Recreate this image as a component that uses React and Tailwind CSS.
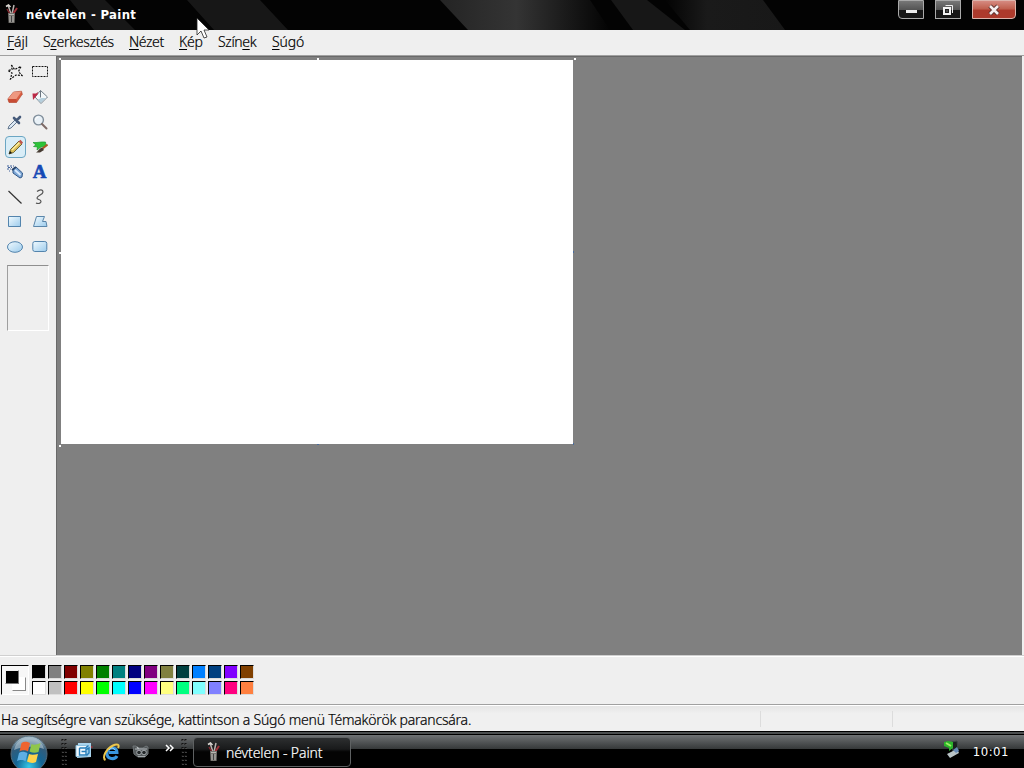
import React from 'react';

const MENUS = [
  { parts: ['', 'F', 'ájl'], cls: 'w-9' },
  { parts: ['S', 'z', 'erkesztés'], cls: 'w-[86px] tracking-[-0.3px]' },
  { parts: ['', 'N', 'ézet'], cls: 'w-[50px] tracking-[-0.4px]' },
  { parts: ['', 'K', 'ép'], cls: 'w-[39px] tracking-[-0.2px]' },
  { parts: ['Szín', 'e', 'k'], cls: 'w-[54px] tracking-[-0.35px]' },
  { parts: ['', 'S', 'úgó'], cls: 'w-10 tracking-[-0.1px]' },
];

const COLOURS = [
  ['bg-black', 'bg-white'],
  ['bg-[#808080]', 'bg-[#c0c0c0]'],
  ['bg-[#800000]', 'bg-[#ff0000]'],
  ['bg-[#808000]', 'bg-[#ffff00]'],
  ['bg-[#008000]', 'bg-[#00ff00]'],
  ['bg-[#008080]', 'bg-[#00ffff]'],
  ['bg-[#000080]', 'bg-[#0000ff]'],
  ['bg-[#800080]', 'bg-[#ff00ff]'],
  ['bg-[#808040]', 'bg-[#ffff80]'],
  ['bg-[#004040]', 'bg-[#00ff80]'],
  ['bg-[#0080ff]', 'bg-[#80ffff]'],
  ['bg-[#004080]', 'bg-[#8080ff]'],
  ['bg-[#8000ff]', 'bg-[#ff0080]'],
  ['bg-[#804000]', 'bg-[#ff8040]'],
];

function Svg({ children, className = 'h-4 w-4' }) {
  return (
    <svg viewBox="0 0 16 16" fill="none" className={className}>
      {children}
    </svg>
  );
}

function BrushPot({ className }) {
  return (
    <svg viewBox="0 0 14 20" fill="none" className={className}>
      <path d="M3 1l3 9M9 1L7 10" stroke="#b9b2ae" strokeWidth="1.5" />
      <path d="M1 2.5l2.5-1.5 2 2" stroke="#d8d5d0" strokeWidth="1.6" />
      <path d="M12 4L8 10" stroke="#a03038" strokeWidth="2" />
      <path d="M2 5l3 5" stroke="#8b2a30" strokeWidth="1.4" />
      <path d="M3 9h7l-.4 10H3.6z" fill="#777571" />
      <path d="M4 10.5h5M5 12v6M8 12v6" stroke="#b9b7b2" />
      <path d="M6.5 12v6" stroke="#444" />
    </svg>
  );
}

function TextA() {
  return (
    <span className="font-['Liberation_Serif',serif] text-[19px] leading-4 font-bold text-[#1649b5] [-webkit-text-stroke:0.6px_#1649b5]">
      A
    </span>
  );
}

const TOOLS = [
  <Svg key="free">
    <path d="M4.500 1l3 4.500L14 2.500l-2.500 5 3.500 4-6-.5L3.500 15l1.500-6L1 6.500l4-1z" stroke="#111" strokeWidth="1.200" strokeDasharray="2 1.200" />
  </Svg>,
  <Svg key="select">
    <path d="M.5 2.500h15v10H.5z" stroke="#111" strokeDasharray="2 1" />
  </Svg>,
  <Svg key="eraser">
    <path d="M.8 10L6.500 3l8-.8.8 3-5.800 8.300H2z" fill="#d95f43" stroke="#a9432d" strokeWidth=".6" />
    <path d="M1 10L6.500 3l8-.5-5.200 7.500z" fill="#ee9880" />
    <path d="M1 10h8.300l.5 3.300H2z" fill="#c74c34" />
  </Svg>,
  <Svg key="fill">
    <path d="M8.500 1.500l7 6.500-6.500 6.500-6-6.500z" fill="#f4f8fa" stroke="#74808a" />
    <path d="M8.500 1.500v7" stroke="#6b7680" />
    <path d="M.5 4.500h3.500l2-1.500-.5 2.500-2.500 3-2 2.500z" fill="#bd2946" />
    <path d="M9.500 9h4.500l-5 4.800-3.500-3z" fill="#b5cfdd" />
  </Svg>,
  <Svg key="pick">
    <path d="M1 15l1-3 6-6 2 2-6 6z" fill="#dce8f4" stroke="#64788f" />
    <path d="M7 4l5 5M10 6l3-3" stroke="#465b7b" strokeWidth="2.600" strokeLinecap="round" />
  </Svg>,
  <Svg key="zoom">
    <circle cx="6.500" cy="6" r="4.900" fill="#e9f1f7" stroke="#7f8d9a" strokeWidth="1.400" />
    <path d="M3.500 6a3 3 0 013-3" stroke="#fff" />
    <path d="M10 10l4.500 4.500" stroke="#7d6966" strokeWidth="2" strokeLinecap="round" />
  </Svg>,
  <Svg key="pencil">
    <path d="M1 15l1.500-4.500L11 2l3 3-8.500 8.500z" fill="#d9bd58" stroke="#5f582c" strokeWidth=".9" />
    <path d="M4 11l8-8" stroke="#fff0a3" strokeWidth="1.300" />
    <path d="M10.500 2.500L12.500.8 15 3.500l-1.500 2z" fill="#bf554d" />
    <path d="M1 15l1-3 2 2z" fill="#111" />
  </Svg>,
  <Svg key="brush">
    <path d="M1 3.500c4 .5 8-1 12.500-.5L14 7 9 8l-4 3 .5-3-4-.5L4 6z" fill="#2cc437" stroke="#1a9a2b" strokeWidth=".7" />
    <path d="M15.500 5.500L10 10" stroke="#a65a25" strokeWidth="2" />
    <path d="M10 8.500l2 2.500L8 13.500H4c2-1 3-4 6-5z" fill="#463b32" />
  </Svg>,
  <Svg key="spray">
    <path d="M6 5l3-2 6.500 6-.5 4-2 1-7-5z" fill="#7fa9d7" stroke="#315787" />
    <path d="M8 6l5.500 5" stroke="#dcecff" strokeWidth="1.700" />
    <path d="M5 6l4-3" stroke="#28446c" strokeWidth="2" />
    <path d="M0 2h2m1 0h2m1 0h1M1 3.500h2m1 0h1M0 5h2m1 0h1M2 7h1" stroke="#3f619a" />
  </Svg>,
  <TextA key="text" />,
  <Svg key="line">
    <path d="M1.500 2l13 12.500" stroke="#333" strokeWidth="1.200" />
  </Svg>,
  <Svg key="curve">
    <path d="M5 2.500c3-2.500 6-2 6 .5 0 3-6 3.500-6 6 0 2 4 1 4 3.500 0 2-3 2.500-5 1.500" stroke="#555" strokeWidth="1.200" />
  </Svg>,
  <Svg key="rect">
    <path d="M1.500 2.500h12v10h-12z" fill="url(#glass)" stroke="#5384ad" />
  </Svg>,
  <Svg key="poly">
    <path d="M4.500 2.500h8L10.500 7.500h3.500l1 5H1.500z" fill="url(#glass)" stroke="#5b86aa" />
  </Svg>,
  <Svg key="ellipse">
    <ellipse cx="8" cy="8" rx="7.500" ry="5.300" fill="url(#glass)" stroke="#5384ad" />
  </Svg>,
  <Svg key="round">
    <rect x=".8" y="2.500" width="14" height="10" rx="2" fill="url(#glass)" stroke="#5384ad" />
  </Svg>,
];

function TitleBar() {
  return (
    <header className="relative flex h-[30px] shrink-0 overflow-hidden bg-[#030303]">
      <svg className="absolute inset-0 h-[30px] w-[1024px]" viewBox="0 0 1024 30">
        <defs>
          <linearGradient id="streak">
            <stop offset="0" stopColor="#242424" />
            <stop offset=".45" stopColor="#343434" />
            <stop offset="1" stopColor="#030303" />
          </linearGradient>
          <linearGradient id="band">
            <stop offset="0" stopColor="#030303" />
            <stop offset=".35" stopColor="#1a1a1a" />
            <stop offset="1" stopColor="#181818" />
          </linearGradient>
        </defs>
        <path d="M70 0h35l30 30H94zM187 0h73l28 30h-74z" fill="#171717" />
        <path d="M440 0h150l20 30H468z" fill="url(#streak)" />
        <path d="M611 0h36l38 30h-52z" fill="#171717" />
        <path d="M665 0h98l22 30H690z" fill="url(#band)" />
      </svg>
      <div className="relative flex w-full items-start">
        <BrushPot className="mt-1 ml-[5px] h-5 w-[14px]" />
        <h1 className="mt-[5px] ml-[7px] font-['DejaVu_Sans_Condensed','DejaVu_Sans',sans-serif] text-[13px] leading-5 font-bold tracking-[0.35px] text-white">
          névtelen - Paint
        </h1>
        <div className="ml-auto flex pr-2">
          <button className="mr-[11px] flex h-[19px] w-[26px] items-end justify-center rounded-bl border border-[#aaa] bg-linear-to-b from-[#777] from-0% via-[#555] via-50% to-[#171717] to-55% pb-[5px]">
            <span className="h-[3px] w-[11px] bg-[#eee]" />
          </button>
          <button className="mr-[11px] flex h-[19px] w-[26px] items-center justify-center border border-[#aaa] bg-linear-to-b from-[#777] from-0% via-[#555] via-50% to-[#171717] to-55%">
            <svg viewBox="0 0 12 12" className="h-3 w-3" fill="none">
              <path d="M3.500 1.500h7V9" stroke="#eee" />
              <path d="M2 4h6v6H2z" fill="#222" stroke="#f4f4f4" strokeWidth="2" />
              <path d="M4.500 6.500h1v1h-1z" fill="#ccc" />
            </svg>
          </button>
          <button className="flex h-[19px] w-11 items-center justify-center rounded-br border border-[#ddb4ac] bg-linear-to-b from-[#d58a80] from-0% via-[#c0604f] via-45% to-[#ad3a2c] to-55%">
            <svg viewBox="0 0 14 12" className="h-3 w-[14px]" fill="none">
              <path d="M3 2l8 8M11 2L3 10" stroke="#542c29" strokeWidth="4.500" />
              <path d="M3 2l8 8M11 2L3 10" stroke="#f5eeee" strokeWidth="2.600" />
            </svg>
          </button>
        </div>
      </div>
    </header>
  );
}

function ToolBox() {
  return (
    <aside className="w-14 shrink-0 bg-[#efefef] pt-[3px]">
      <div className="grid grid-cols-[25px_25px] auto-rows-[25px] pl-[2px]">
        {TOOLS.map((tool, i) => (
          <button
            key={i}
            className={
              i === 6
                ? 'ml-[3px] flex h-[22px] w-[21px] items-center justify-center self-center rounded-sm border border-[#6ba6c3] bg-[#d9edf7]'
                : 'flex items-center justify-center'
            }
          >
            {tool}
          </button>
        ))}
      </div>
      <div className="mt-[6px] ml-[7px] h-[66px] w-[42px] border border-t-[#8f8f8f] border-r-white border-b-white border-l-[#9f9f9f]" />
    </aside>
  );
}

function Handle({ className }) {
  return <span className={`absolute size-0.5 ${className}`} />;
}

function Canvas() {
  return (
    <main className="min-w-0 flex-1 border-t border-l border-[#696969] bg-[#808080] pt-[3px] pl-1">
      <div className="relative h-[384px] w-[512px] bg-white">
        <Handle className="-top-0.5 -left-0.5 bg-white" />
        <Handle className="-top-0.5 left-[256px] bg-white" />
        <Handle className="-top-0.5 left-[513px] bg-white" />
        <Handle className="top-[192px] -left-0.5 bg-white" />
        <Handle className="top-[191px] left-[512px] w-px! bg-[#4a6c9c]" />
        <Handle className="top-[385px] -left-0.5 bg-white" />
        <Handle className="top-[384px] left-[256px] h-px! bg-[#4a6c9c]" />
        <Handle className="top-[383px] left-[512px] w-px! bg-[#4a6c9c]" />
      </div>
    </main>
  );
}

function Palette() {
  return (
    <section className="flex h-12 shrink-0 border-t border-white bg-[#efefef] pt-2 pl-px">
      <div className="relative mr-[3px] h-[30px] w-7 border border-t-black border-r-white border-b-white border-l-black bg-[#f7f7f7]">
        <div className="absolute top-[11px] left-[10px] h-[14px] w-[14px] border border-t-white border-r-[#888] border-b-[#888] border-l-white bg-white" />
        <div className="absolute top-1 left-[3px] h-[14px] w-[14px] border border-t-[#eee] border-r-[#777] border-b-[#777] border-l-[#eee] bg-black" />
      </div>
      <div className="flex">
        {COLOURS.map((pair, i) => (
          <div key={i} className="flex w-4 flex-col gap-0.5">
            {pair.map((c) => (
              <button
                key={c}
                className={`h-[14px] w-[14px] border border-t-black border-r-[#ddd] border-b-[#ddd] border-l-black ${c}`}
              />
            ))}
          </div>
        ))}
      </div>
    </section>
  );
}

function DotGrip({ className }) {
  return (
    <svg viewBox="0 0 6 28" className={className} fill="none">
      <path d="M1.500 0v28M4.500 0v28" stroke="#111" strokeWidth="2" strokeDasharray="2 2" />
      <path d="M2 1v27M5 1v27" stroke="#777" strokeDasharray="1 3" />
    </svg>
  );
}

function StartOrb() {
  return (
    <svg viewBox="0 0 38 32" className="h-8 w-[38px]">
      <defs>
        <radialGradient id="orb" cx=".5" cy=".85" r=".8">
          <stop offset="0" stopColor="#35c9e8" />
          <stop offset=".45" stopColor="#146594" />
          <stop offset=".8" stopColor="#335b79" />
          <stop offset="1" stopColor="#a1b8c5" />
        </radialGradient>
      </defs>
      <circle cx="19" cy="18" r="18" fill="url(#orb)" stroke="#546c7c" />
      <path d="M4 14C6 5 12 2 19 2s13 3 15 11c-9-3-20-3-30 1z" fill="#b7cad5" opacity=".6" />
      <path d="M11.500 7c3-2 6-1 8.500 0l-2 8.500c-2-1-5-2-8.500 0z" fill="#ef6430" />
      <path d="M21.500 8c2 1 5 1 9-1l-2 9c-3 1-6 1-9-.5z" fill="#8fc64b" />
      <path d="M9 17c3-2 6-1 8.500.2l-2 8c-2-1-5-2-8.500 0z" fill="#5eaee4" />
      <path d="M19 18c2 1 5 1 9 0l-2 8c-3 1.500-6 1-9-.5z" fill="#ffd24b" />
    </svg>
  );
}

function TaskBar() {
  return (
    <footer className="flex h-[37px] shrink-0 flex-col bg-black text-white">
      <div className="mt-px h-[2px] shrink-0 bg-[#4c4f50]" />
      <div className="h-px shrink-0 bg-black" />
      <div className="flex min-h-0 flex-1 items-start bg-linear-to-b from-[#707375] from-0% via-[#36393a] via-[42%] to-black to-[44%]">
        <button className="ml-[10px] h-8 w-[38px] pt-px"><StartOrb /></button>
        <DotGrip className="mt-1 ml-[13px] h-7 w-[6px]" />
        <svg viewBox="0 0 18 18" className="mt-[7px] ml-2 h-[18px] w-[18px]" fill="none">
          <path d="M3 1h13v14l-14 1z" fill="#a9d3ec" />
          <path d="M1 3.500h11v11H1z" fill="#f2f9fd" stroke="#8fc3e0" />
          <path d="M4.500 6h6l3-2.500M4.500 6v7H12l2-2V6l-3 1.500V13M6.500 9.500h5" stroke="#267db9" strokeWidth="1.400" />
          <path d="M16 5h1.500" stroke="#b4303c" strokeWidth="1.500" />
        </svg>
        <svg viewBox="0 0 20 20" className="mt-[7px] ml-[9px] h-5 w-5" fill="none">
          <path d="M15 14c-2 4-10 3.500-10-2.500C5 4.500 15 4 15 10.500H7" stroke="#3997df" strokeWidth="3" />
          <path d="M3.500 18C-.5 16 4 7 11 3.500c4-2 7-1 5 2.500" stroke="#edc64a" strokeWidth="2" />
          <path d="M7 8c2-3 5-2 6 0" stroke="#a6dcff" />
        </svg>
        <svg viewBox="0 0 18 18" className="mt-[7px] ml-[10px] h-[18px] w-[18px]" fill="none">
          <path d="M1 4h3l2 2h5l3-2 2 1v7l-3 3H6l-4-3z" fill="#54595b" stroke="#6e7477" />
          <path d="M3 7h12M5 5l2 2" stroke="#b4babd" strokeWidth="1.200" />
          <circle cx="7" cy="10.500" r="2.300" fill="#25292b" stroke="#a5abae" />
          <circle cx="12" cy="10.500" r="2.300" fill="#25292b" stroke="#a5abae" />
          <path d="M6 14.500h7" stroke="#a4aaad" />
        </svg>
        <svg viewBox="0 0 9 8" className="mt-[9px] ml-[15px] h-2 w-[9px]" fill="none">
          <path d="M1 1l3 3-3 3M5 1l3 3-3 3" stroke="#fff" strokeWidth="1.500" />
        </svg>
        <DotGrip className="mt-1 ml-[7px] h-7 w-[6px]" />
        <button className="mt-0.5 ml-[6px] flex h-[30px] w-[158px] items-center rounded border border-[#5e6162] bg-linear-to-b from-[#2d2f30] from-0% via-[#191a1b] via-40% to-[#040404] to-50%">
          <BrushPot className="ml-[13px] h-5 w-[14px]" />
          <span className="mt-px ml-[5px] text-[14px] leading-5 font-light tracking-[-0.1px] whitespace-nowrap [-webkit-text-stroke:0.2px]">névtelen - Paint</span>
        </button>
        <svg viewBox="0 0 18 20" className="mt-1 ml-auto h-5 w-[18px]" fill="none">
          <path d="M9 3l5-1 1 9-5 2z" fill="#1b211f" stroke="#3b4845" />
          <path d="M1 3l4-1 5 1v6l-4 3V9L1 7z" fill="#2bb52b" />
          <path d="M3 4l5 3" stroke="#a0ed66" strokeWidth="2" />
          <path d="M4 15l10-5 2 4-9 5z" fill="#b9c3c6" />
          <path d="M10 11l4-3 2 4-3 2z" fill="#6689b5" />
        </svg>
        <time className="mt-[7px] mr-[15px] ml-3 font-['DejaVu_Sans_Condensed','DejaVu_Sans',sans-serif] text-[13px] leading-5 tracking-[0.5px]">10:01</time>
      </div>
    </footer>
  );
}

export default function App() {
  return (
    <div className="relative flex h-[768px] w-[1024px] cursor-default flex-col overflow-hidden bg-[#efefef] font-['Noto_Sans',sans-serif] text-black">
      <svg className="absolute h-0 w-0">
        <linearGradient id="glass" x2="1" y2="1">
          <stop stopColor="#f2fbff" />
          <stop offset="1" stopColor="#9ccbec" />
        </linearGradient>
      </svg>
      <TitleBar />
      <nav className="flex h-[25px] shrink-0 items-center bg-[#efefef] pb-px pl-[7px] text-[14px] leading-5 font-light [-webkit-text-stroke:0.2px]">
        {MENUS.map(({ parts, cls }) => (
          <span key={parts.join('')} className={`whitespace-nowrap ${cls}`}>
            {parts[0]}
            <span className="underline underline-offset-2">{parts[1]}</span>
            {parts[2]}
          </span>
        ))}
      </nav>
      <div className="flex h-[601px] shrink-0 border-t border-b border-t-[#a0a0a0] border-b-[#d0d0d0] pr-0.5">
        <ToolBox />
        <Canvas />
      </div>
      <Palette />
      <div className="h-px shrink-0 bg-[#a0a0a0]" />
      <div className="flex h-[26px] shrink-0 items-center border-t border-white bg-linear-to-b from-[#e5e5e5] to-[#f0f0f0] to-30% pl-px text-[14px] leading-5 font-light">
        <p className="w-[759px] pt-0.5 tracking-[-0.21px] [-webkit-text-stroke:0.2px]">Ha segítségre van szüksége, kattintson a Súgó menü Témakörök parancsára.</p>
        <span className="h-4 w-[132px] border-l border-[#dcdcdc]" />
        <span className="h-4 flex-1 border-l border-[#dcdcdc]" />
      </div>
      <TaskBar />
      <svg viewBox="0 0 14 22" className="absolute top-[17px] left-[196px] h-[22px] w-[14px]">
        <path d="M1 1v17l4-4 3 7 3-1-3-7h5z" fill="#fff" stroke="#222" strokeWidth=".8" />
      </svg>
    </div>
  );
}
